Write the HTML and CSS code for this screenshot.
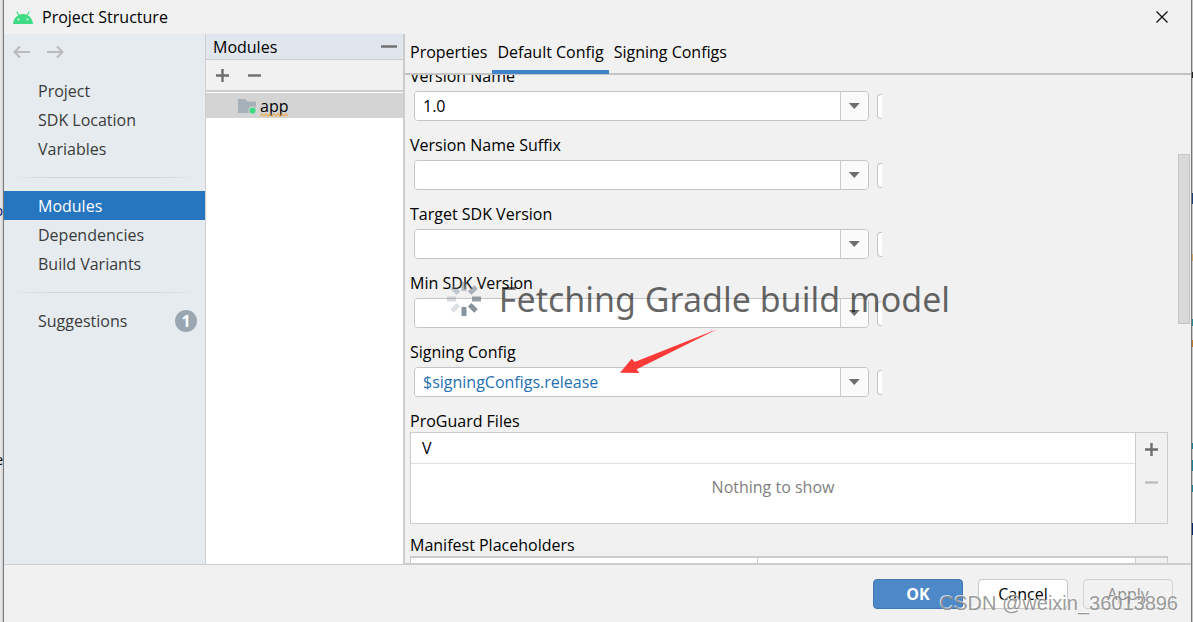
FILE: index.html
```html
<!DOCTYPE html>
<html lang="en">
<head>
    <meta charset="UTF-8">
    <meta name="viewport" content="width=device-width, initial-scale=1">
    <title>Project Structure</title>
    <link rel="stylesheet" href="styles.css">
</head>
<body>
    <div class="desktop">
        <div class="edge edge-left">
            <span class="code code-p">p</span>
            <span class="code code-e">e</span>
        </div>
        <div class="window">
            <header class="titlebar">
                <svg class="android" width="20" height="13" viewBox="0 0 20 13">
                    <path d="M0 13C.3 9 2.3 5.900 5.200 4.200L3.300.9 4.200.3 6.200 3.700C8.600 2.700 11.400 2.700 13.800 3.700L15.800.3 16.700.9 14.800 4.200C17.700 5.900 19.700 9 20 13Z" fill="#3ddc84"/>
                    <circle cx="5.500" cy="8.500" r="1" fill="#f1f1f1"/>
                    <circle cx="14.500" cy="8.500" r="1" fill="#f1f1f1"/>
                </svg>
                <h1>Project Structure</h1>
                <button class="close" aria-label="Close">
                    <svg width="12" height="12" viewBox="0 0 12 12"><path d="M.5.5L11.500 11.500M11.500.5L.5 11.500" stroke="#111" stroke-width="1.300"/></svg>
                </button>
            </header>
            <div class="body">
                <nav class="sidebar">
                    <div class="history">
                        <button aria-label="Back"><svg width="18" height="14" viewBox="0 0 18 14"><path d="M17 7H2M7 1.500L1.500 7 7 12.500"/></svg></button>
                        <button aria-label="Forward"><svg width="18" height="14" viewBox="0 0 18 14"><path d="M1 7H16M11 1.500L16.500 7 11 12.500"/></svg></button>
                    </div>
                    <ul>
                        <li><a href="#">Project</a></li>
                        <li><a href="#">SDK Location</a></li>
                        <li><a href="#">Variables</a></li>
                    </ul>
                    <hr>
                    <ul>
                        <li class="active"><a href="#">Modules</a></li>
                        <li><a href="#">Dependencies</a></li>
                        <li><a href="#">Build Variants</a></li>
                    </ul>
                    <hr>
                    <ul>
                        <li><a href="#">Suggestions <span class="count">1</span></a></li>
                    </ul>
                </nav>
                <div class="content">
                    <section class="modules">
                        <div class="modules-head">
                            <h2>Modules</h2>
                            <button aria-label="Hide"><svg width="16" height="3" viewBox="0 0 16 3"><path d="M0 1.500H16" stroke="#6e6e6e" stroke-width="2.400"/></svg></button>
                        </div>
                        <div class="modules-tools">
                            <button aria-label="Add module"><svg width="13" height="13" viewBox="0 0 13 13"><path d="M0 6.500H13M6.500 0V13" stroke="#6e6e6e" stroke-width="2.400"/></svg></button>
                            <button aria-label="Remove module"><svg width="13" height="13" viewBox="0 0 13 13"><path d="M0 6.500H13" stroke="#6e6e6e" stroke-width="2.400"/></svg></button>
                        </div>
                        <ul class="tree">
                            <li>
                                <svg width="20" height="16" viewBox="0 0 20 16">
                                    <path d="M1 1H8L10.500 3.500H19V15H1Z" fill="#a5b0b8"/>
                                    <circle cx="15.500" cy="12.500" r="4.200" fill="#d4d4d4"/>
                                    <circle cx="15.500" cy="12.500" r="3.100" fill="#3ddc84"/>
                                </svg>
                                <span class="warn">app
                                    <svg width="28" height="4" viewBox="0 0 28 4"><path d="M0 3.500L2 .5 4 3.500 6 .5 8 3.500 10 .5 12 3.500 14 .5 16 3.500 18 .5 20 3.500 22 .5 24 3.500 26 .5 28 3.500" fill="none" stroke="#f0a030"/></svg>
                                </span>
                            </li>
                        </ul>
                    </section>
                    <main class="details">
                        <div class="tabs">
                            <button>Properties</button>
                            <button class="active">Default Config</button>
                            <button>Signing Configs</button>
                        </div>
                        <div class="scroll">
                            <form class="form">
                                <div class="field">
                                    <label for="versionName">Version Name</label>
                                    <div class="row">
                                        <div class="combo"><input id="versionName" type="text" value="1.0"><button type="button" aria-label="Show values"></button></div>
                                        <i class="stub"></i>
                                    </div>
                                </div>
                                <div class="field">
                                    <label for="suffix">Version Name Suffix</label>
                                    <div class="row">
                                        <div class="combo"><input id="suffix" type="text"><button type="button" aria-label="Show values"></button></div>
                                        <i class="stub"></i>
                                    </div>
                                </div>
                                <div class="field">
                                    <label for="targetSdk">Target SDK Version</label>
                                    <div class="row">
                                        <div class="combo"><input id="targetSdk" type="text"><button type="button" aria-label="Show values"></button></div>
                                        <i class="stub"></i>
                                    </div>
                                </div>
                                <div class="field">
                                    <label for="minSdk">Min SDK Version</label>
                                    <div class="row">
                                        <div class="combo"><input id="minSdk" type="text"><button type="button" aria-label="Show values"></button></div>
                                        <i class="stub"></i>
                                    </div>
                                </div>
                                <div class="field">
                                    <label for="signing">Signing Config</label>
                                    <div class="row">
                                        <div class="combo"><input id="signing" class="variable" type="text" value="$signingConfigs.release"><button type="button" aria-label="Show values"></button></div>
                                        <i class="stub"></i>
                                        <svg class="pointer" width="98" height="45" viewBox="0 0 98 45"><path d="M0 43.700L11.700 29.700 14.700 33 97.700 0 16.700 40.300 19.300 44Z" fill="#fc3a38"/></svg>
                                    </div>
                                </div>
                                <div class="block">
                                    <h3>ProGuard Files</h3>
                                    <div class="list">
                                        <table>
                                            <thead><tr><th>V</th></tr></thead>
                                            <tbody><tr><td>Nothing to show</td></tr></tbody>
                                        </table>
                                        <div class="list-tools">
                                            <button type="button" aria-label="Add file"><svg width="13" height="13" viewBox="0 0 13 13"><path d="M0 6.500H13M6.500 0V13" stroke="#6e6e6e" stroke-width="2.400"/></svg></button>
                                            <button type="button" aria-label="Remove file" disabled><svg width="13" height="13" viewBox="0 0 13 13"><path d="M0 6.500H13" stroke="#bdbdbd" stroke-width="2.400"/></svg></button>
                                        </div>
                                    </div>
                                </div>
                                <div class="block">
                                    <h3>Manifest Placeholders</h3>
                                    <div class="list list-map">
                                        <table>
                                            <tbody><tr><td></td><td></td></tr></tbody>
                                        </table>
                                        <div class="list-tools"></div>
                                    </div>
                                </div>
                            </form>
                            <div class="thumb"></div>
                        </div>
                    </main>
                    <div class="loading">
                        <svg width="34" height="34" viewBox="-17 -17 34 34" stroke="#7d8891" stroke-width="5">
                            <path d="M0 8V17" opacity=".9"/>
                            <path d="M0 8V17" opacity=".25" transform="rotate(45)"/>
                            <path d="M0 8V17" opacity=".3" transform="rotate(90)"/>
                            <path d="M0 8V17" opacity=".4" transform="rotate(135)"/>
                            <path d="M0 8V17" opacity=".5" transform="rotate(180)"/>
                            <path d="M0 8V17" opacity=".6" transform="rotate(225)"/>
                            <path d="M0 8V17" opacity=".8" transform="rotate(270)"/>
                            <path d="M0 8V17" opacity=".9" transform="rotate(315)"/>
                        </svg>
                        <span>Fetching Gradle build model</span>
                    </div>
                </div>
            </div>
            <footer class="footer">
                <button class="btn primary">OK</button>
                <button class="btn">Cancel</button>
                <button class="btn" disabled>Apply</button>
            </footer>
        </div>
        <div class="edge edge-right"></div>
        <div class="watermark">CSDN @weixin_36013896</div>
    </div>
</body>
</html>
```

FILE: styles.css
```css
*{
    margin: 0;
    padding: 0;
    box-sizing: border-box;
    list-style: none;
}
body{
    font-family: "Open Sans", "Noto Sans", sans-serif;
    font-size: 16px;
    line-height: 22px;
    color: #000000;
}
button{
    border: 0;
    background: none;
    font: inherit;
    color: inherit;
}
input{
    font: inherit;
}
svg{
    display: block;
}
h1,h2,h3{
    font-size: 16px;
    font-weight: normal;
}
.desktop{
    position: relative;
    display: flex;
    height: 100vh;
    overflow: hidden;
}

/* editor behind the dialog */
.edge{
    position: relative;
    overflow: hidden;
    flex: none;
}
.edge-left{
    width: 3px;
    background: linear-gradient(90deg,#ebebeb,#d2d2d2);
}
.edge-right{
    width: 1px;
    background: linear-gradient(#c8c8c8 72px,#222222 72px,#222222 78px,#c8c8c8 78px,#c8c8c8 193px,#1d3f77 193px,#1d3f77 204px,#c8c8c8 204px,#c8c8c8 254px,#c9a468 254px,#c9a468 261px,#c8c8c8 261px,#c8c8c8 319px,#2a8a94 319px,#2a8a94 326px,#c8c8c8 326px,#c8c8c8 340px,#c07a2e 340px,#c07a2e 347px,#c8c8c8 347px,#c8c8c8 443px,#1b7f96 443px,#1b7f96 449px,#c8c8c8 449px,#c8c8c8 460px,#1b7f96 460px,#1b7f96 471px,#c8c8c8 471px,#c8c8c8 485px,#1b7f96 485px,#1b7f96 492px,#c8c8c8 492px,#c8c8c8 523px,#06256b 523px,#06256b 535px,#c8c8c8 535px);
}
.code{
    position: absolute;
    right: 0;
    font-size: 14px;
    line-height: 18px;
}
.code-p{
    top: 202px;
    color: #001a80;
}
.code-e{
    top: 451px;
}

.window{
    flex: 1;
    min-width: 0;
    display: flex;
    flex-direction: column;
    border: solid #767676;
    border-width: 0 1px;
    background-color: #f1f1f1;
}
.titlebar{
    flex: none;
    display: flex;
    align-items: center;
    height: 34px;
    padding: 0 23px 0 9px;
}
.titlebar h1{
    flex: 1;
    margin-left: 9px;
}
.body{
    flex: 1;
    min-height: 0;
    display: flex;
}

.sidebar{
    flex: none;
    width: 202px;
    border-right: 1px solid #cfcfcf;
    background-color: #e5ebef;
    color: #3b3b3b;
}
.history{
    display: flex;
    gap: 15px;
    height: 42px;
    padding: 0 9px;
}
.history button{
    height: 36px;
}
.history path{
    fill: none;
    stroke: #b8babb;
    stroke-width: 2;
}
.sidebar a{
    display: flex;
    align-items: center;
    justify-content: space-between;
    height: 29px;
    padding: 0 8px 0 34px;
    color: inherit;
    text-decoration: none;
}
.sidebar .active{
    background-color: #2675bf;
    color: #ffffff;
}
.sidebar hr{
    height: 1px;
    margin: 14px 8px 13px;
    border: 0;
    background: linear-gradient(90deg,transparent,#d4d6d8 20%,#d4d6d8 80%,transparent);
}
.count{
    width: 22px;
    border-radius: 50%;
    background-color: #9aa7b2;
    color: #ffffff;
    font-weight: bold;
    text-align: center;
}

.content{
    position: relative;
    flex: 1;
    min-width: 0;
    display: flex;
}
.modules{
    flex: none;
    width: 199px;
    border-right: 2px solid #cccccc;
    background-color: #ffffff;
}
.modules-head{
    display: flex;
    align-items: center;
    justify-content: space-between;
    height: 26px;
    padding: 0 6px 0 7px;
    border-bottom: 1px solid #cccccc;
    background-color: #e1e5ed;
}
.modules-tools{
    display: flex;
    align-items: center;
    gap: 19px;
    height: 32px;
    padding: 0 10px;
    border-bottom: 2px solid #cccccc;
    background-color: #f1f1f1;
}
.tree li{
    display: flex;
    align-items: center;
    gap: 3px;
    height: 25px;
    margin-top: 1px;
    padding-left: 31px;
    background-color: #d4d4d4;
}
.warn{
    position: relative;
}
.warn svg{
    position: absolute;
    left: 0;
    bottom: 0;
}

.details{
    flex: 1;
    min-width: 0;
    display: flex;
    flex-direction: column;
}
.tabs{
    flex: none;
    display: flex;
    height: 41px;
    border-bottom: 2px solid #c4c4c4;
}
.tabs button{
    height: 40px;
    padding: 0 5px;
    border-bottom: 4px solid transparent;
}
.tabs .active{
    border-color: #4083c9;
}
.scroll{
    position: relative;
    flex: 1;
    min-height: 0;
    overflow: hidden;
    border-bottom: 1px solid #cccccc;
}
.form{
    margin: -10px 23px 0 5px;
}
.field{
    margin-bottom: 13px;
}
.field label{
    display: block;
    margin-bottom: 4px;
}
.row{
    position: relative;
    display: flex;
    align-items: center;
    gap: 8px;
    width: calc(60% + 17px);
    padding-left: 4px;
}
.combo{
    flex: 1;
    display: flex;
    height: 30px;
    border: 1px solid #c4c4c4;
    border-radius: 4px;
    overflow: hidden;
}
.combo input{
    flex: 1;
    min-width: 0;
    padding: 0 8px;
    border: 0;
    background-color: #ffffff;
}
.combo .variable{
    color: #2470b3;
}
.combo button{
    width: 28px;
    border-left: 1px solid #cccccc;
    background-color: #fafafa;
}
.combo button::before{
    content: "";
    display: block;
    width: 11px;
    height: 6px;
    margin: 0 auto;
    background-color: #6e6e6e;
    clip-path: polygon(0 0,100% 0,50% 100%);
}
.stub{
    width: 5px;
    height: 25px;
    border: 1px solid #c4c4c4;
    border-right: 0;
    border-radius: 4px 0 0 4px;
    background-color: #ffffff;
}
.pointer{
    position: absolute;
    left: 210px;
    top: -38px;
}

.block{
    margin-bottom: 10px;
}
.list{
    display: flex;
    height: 92px;
    border: 1px solid #cccccc;
    background-color: #ffffff;
}
.list table{
    flex: 1;
    border-collapse: collapse;
}
.list th{
    height: 30px;
    padding-left: 11px;
    border-bottom: 1px solid #e0e0e0;
    font-weight: normal;
    text-align: left;
}
.list td{
    padding-bottom: 12px;
    color: #808080;
    text-align: center;
}
.list-tools{
    display: flex;
    flex-direction: column;
    align-items: center;
    gap: 20px;
    width: 32px;
    padding-top: 10px;
    border-left: 1px solid #cccccc;
    background-color: #f1f1f1;
}
.list-map{
    border-top-width: 2px;
}
.list-map td{
    width: 346px;
}
.list-map td + td{
    width: auto;
    border-left: 1px solid #cccccc;
}
.thumb{
    position: absolute;
    top: 79px;
    right: 1px;
    width: 12px;
    height: 170px;
    border: 1px solid #c6c6c6;
    background-color: #d9d9d9;
}

.loading{
    position: absolute;
    inset: 0;
    display: flex;
    align-items: center;
    justify-content: center;
    gap: 18px;
    font-family: "Noto Sans", "Open Sans", sans-serif;
    font-size: 34px;
    line-height: 44px;
    color: rgba(0,0,0,.6);
    white-space: nowrap;
    pointer-events: none;
}

.footer{
    flex: none;
    display: flex;
    justify-content: flex-end;
    gap: 15px;
    height: 58px;
    padding: 14px 18px 0;
    border-top: 1px solid #cccccc;
}
.btn{
    width: 90px;
    height: 30px;
    border: 1px solid #c8c8c8;
    border-radius: 4px;
    background-color: #ffffff;
}
.btn.primary{
    border-color: #4077b5;
    background-color: #4d89c8;
    color: #ffffff;
    font-weight: bold;
}
.btn:disabled{
    border-color: #d0d0d0;
    background-color: #f1f1f1;
    color: #8c8c8c;
}
.watermark{
    position: absolute;
    right: 15px;
    bottom: 7px;
    font-family: "Liberation Sans", Arial, sans-serif;
    font-size: 20px;
    line-height: 24px;
    color: rgba(130,130,130,.8);
    text-shadow: -1px -1px 0 rgba(255,255,255,.7);
}
```
